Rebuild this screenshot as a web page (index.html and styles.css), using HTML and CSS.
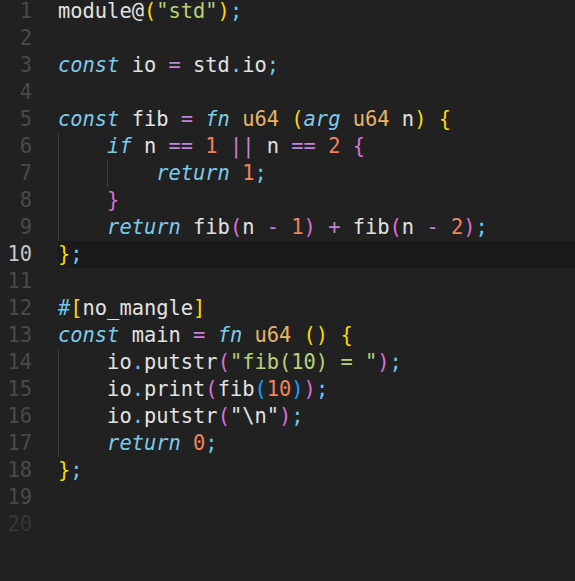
FILE: index.html
```html
<!DOCTYPE html>
<html>
<head>
<meta charset="utf-8">
<link rel="stylesheet" href="styles.css">
</head>
<body>
<div class="editor">
  <div class="line"><span class="ln">1</span><span class="code">module@<span class="b1">(</span><span class="str">"std"</span><span class="b1">)</span><span class="p">;</span></span></div>
  <div class="line"><span class="ln">2</span><span class="code"></span></div>
  <div class="line"><span class="ln">3</span><span class="code"><span class="kw">const</span> io <span class="op">=</span> std<span class="p">.</span>io<span class="p">;</span></span></div>
  <div class="line"><span class="ln">4</span><span class="code"></span></div>
  <div class="line"><span class="ln">5</span><span class="code"><span class="kw">const</span> fib <span class="op">=</span> <span class="kw">fn</span> <span class="ty">u64</span> <span class="b1">(</span><span class="kw">arg</span> <span class="ty">u64</span> n<span class="b1">)</span> <span class="b1">{</span></span></div>
  <div class="line"><span class="ln">6</span><span class="code"><span class="ind">    </span><span class="kw">if</span> n <span class="op">==</span> <span class="num">1</span> <span class="op">||</span> n <span class="op">==</span> <span class="num">2</span> <span class="b2">{</span></span></div>
  <div class="line"><span class="ln">7</span><span class="code"><span class="ind">    </span><span class="ind">    </span><span class="kw">return</span> <span class="num">1</span><span class="p">;</span></span></div>
  <div class="line"><span class="ln">8</span><span class="code"><span class="ind">    </span><span class="b2">}</span></span></div>
  <div class="line"><span class="ln">9</span><span class="code"><span class="ind">    </span><span class="kw">return</span> fib<span class="b2">(</span>n <span class="op">-</span> <span class="num">1</span><span class="b2">)</span> <span class="op">+</span> fib<span class="b2">(</span>n <span class="op">-</span> <span class="num">2</span><span class="b2">)</span><span class="p">;</span></span></div>
  <div class="line active"><span class="ln">10</span><span class="code"><span class="b1">}</span><span class="p">;</span></span></div>
  <div class="line"><span class="ln">11</span><span class="code"></span></div>
  <div class="line"><span class="ln">12</span><span class="code"><span class="p">#</span><span class="b1">[</span>no_mangle<span class="b1">]</span></span></div>
  <div class="line"><span class="ln">13</span><span class="code"><span class="kw">const</span> main <span class="op">=</span> <span class="kw">fn</span> <span class="ty">u64</span> <span class="b1">()</span> <span class="b1">{</span></span></div>
  <div class="line"><span class="ln">14</span><span class="code"><span class="ind">    </span>io<span class="p">.</span>putstr<span class="b2">(</span><span class="str">"fib(10) = "</span><span class="b2">)</span><span class="p">;</span></span></div>
  <div class="line"><span class="ln">15</span><span class="code"><span class="ind">    </span>io<span class="p">.</span>print<span class="b2">(</span>fib<span class="b3">(</span><span class="num">10</span><span class="b3">)</span><span class="b2">)</span><span class="p">;</span></span></div>
  <div class="line"><span class="ln">16</span><span class="code"><span class="ind">    </span>io<span class="p">.</span>putstr<span class="b2">(</span>"\n"<span class="b2">)</span><span class="p">;</span></span></div>
  <div class="line"><span class="ln">17</span><span class="code"><span class="ind">    </span><span class="kw">return</span> <span class="num">0</span><span class="p">;</span></span></div>
  <div class="line"><span class="ln">18</span><span class="code"><span class="b1">}</span><span class="p">;</span></span></div>
  <div class="line"><span class="ln">19</span><span class="code"></span></div>
  <div class="line dim"><span class="ln">20</span><span class="code"></span></div>
</div>
</body>
</html>
```

FILE: styles.css
```css
html, body {
  margin: 0;
  padding: 0;
  background: #212121;
  height: 100%;
  overflow: hidden;
}
.editor {
  display: flex;
  flex-direction: column;
  margin-top: -2px;
  font-family: "DejaVu Sans Mono", "Liberation Mono", monospace;
  font-size: 20.4px;
  line-height: 27px;
  color: #e2e2e2;
}
.line {
  display: flex;
  height: 27px;
}
.ln {
  width: 58px;
  flex: none;
  box-sizing: border-box;
  padding-right: 26px;
  text-align: right;
  color: #4a4a4a;
}
.code {
  flex: 1;
  white-space: pre;
}
.active .ln { color: #c6c6c6; }
.active .code { background: #1a1a1a; }
.dim .ln { color: #363636; }
.ind {
  display: inline-block;
  box-shadow: inset 1px 0 0 #3e3e3e;
  height: 27px;
  vertical-align: top;
}
.kw { color: #7ccbeb; font-style: italic; }
.op { color: #c283dc; }
.num { color: #f0845f; }
.ty { color: #e8b466; }
.str { color: #b6d37c; }
.p { color: #6fc6ec; }
.b1 { color: #ffd700; }
.b2 { color: #da70d6; }
.b3 { color: #179fff; }
```
